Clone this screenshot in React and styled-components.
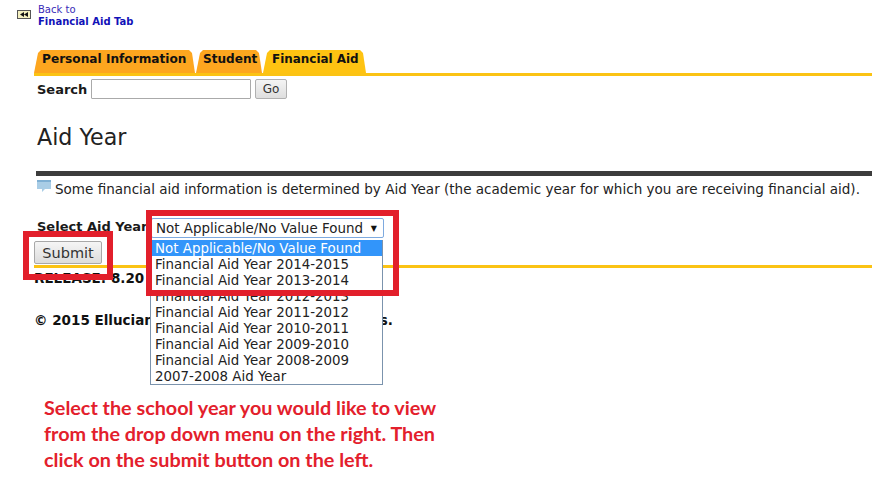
import React from "react";
import styled, { createGlobalStyle } from "styled-components";

const Global = createGlobalStyle`
  html, body { margin: 0; padding: 0; background: #fff; }
  body { font-family: "DejaVu Sans", Verdana, sans-serif; color: #1a1a1a; overflow: hidden; }
`;
const Page = styled.div`position: relative; width: 872px; height: 491px; overflow: hidden;`;
const BackRow = styled.div`display: flex; align-items: flex-start; gap: 7px; padding: 4px 0 0 17px; height: 50px; box-sizing: border-box;`;
const BackIcon = styled.div`
  width: 14px; height: 9px; margin-top: 6px; box-sizing: border-box;
  background: #f4f0c0; border: 1px solid #555; display: flex; align-items: center; justify-content: center;
`;
const BackText = styled.a`display: block; font-size: 10px; line-height: 12px; color: #3a2bb8;
  strong { display: block; color: #1212b8; font-weight: 700; }`;
const Tabs = styled.div`display: flex; padding-left: 34px; height: 23px; align-items: flex-end;`;
const Tab = styled.div`
  height: 23px; box-sizing: border-box; padding: 1px 0 0 ${p => p.$pl || 8}px; font-size: ${p => p.$fs || 12.1}px; font-weight: 700; line-height: 17px; white-space: nowrap;
  width: ${p => p.$w}px; margin-left: ${p => p.$ml || 0}px;
  background: ${p => p.$active ? "#fec312" : "#fda61f"};
  clip-path: polygon(0 100%, 4px 3px, 7px 0, calc(100% - 6px) 0, calc(100% - 3px) 3px, 100% 100%);
  color: #111;
`;
const Rule = styled.div`height: 3px; margin-left: 34px; background: #fbc314;`;
const SearchRow = styled.div`display: flex; align-items: center; padding: 3px 0 0 37px; height: 20px;`;
const SearchLabel = styled.label`font-size: 13px; font-weight: 700; width: 54px;`;
const SearchInput = styled.div`width: 160px; height: 20px; box-sizing: border-box; border: 1px solid #aaa; border-radius: 1px; background: #fff;`;
const GoButton = styled.div`
  width: 32px; height: 20px; margin-left: 4px; box-sizing: border-box; border: 1px solid #b0b0b0; border-radius: 2px;
  background: linear-gradient(#f4f4f4, #dedede); font-size: 12px; line-height: 18px; text-align: center; color: #333;
`;
const Heading = styled.h2`margin: 0; padding: 24px 0 0 37px; height: 48px; font-size: 22.2px; font-weight: 400; line-height: 28px; color: #222;`;
const DarkBar = styled.div`height: 5px; margin-left: 36px; background: #3c3c3c;`;
const Info = styled.div`display: flex; align-items: flex-start; gap: 4px; padding: 4px 0 0 37px; height: 28px; box-sizing: border-box; white-space: nowrap; font-size: 13.54px; line-height: 18px; color: #222;`;
const InfoIcon = styled.svg`width: 14px; height: 13px; flex: none;`;
const FormRow = styled.div`display: flex; align-items: center; padding: 14px 0 0 37px; height: 20px;`;
const SelectLabel = styled.label`font-size: 13px; font-weight: 700; width: 114px; height: 20px; line-height: 17px; white-space: nowrap; overflow: hidden;`;
const SelectBox = styled.div`
  width: 233px; height: 20px; box-sizing: border-box; border: 1px solid #7eaadf; border-radius: 2px; background: #fff;
  display: flex; justify-content: space-between; align-items: center; padding: 0 5px 0 4px; font-size: 13.45px; color: #222; white-space: nowrap;
`;
const Arrow = styled.span`font-size: 8px; color: #111; margin-right: 1px;`;
const SubmitRow = styled.div`padding: 3px 0 0 34px; height: 24px;`;
const SubmitButton = styled.div`
  width: 68px; height: 23px; box-sizing: border-box; border: 1px solid #a8a8a8; border-radius: 2px;
  background: linear-gradient(#f5f5f5, #dcdcdc); font-size: 14.5px; line-height: 22px; text-align: center; color: #333;
`;
const Release = styled.div`padding: 0 0 0 34px; height: 25px; font-size: 13.5px; font-weight: 700; line-height: 20px; color: #111; white-space: nowrap;`;
const Copyright = styled.div`padding: 18px 0 0 34px; font-size: 13.5px; font-weight: 700; line-height: 18px; color: #111; white-space: nowrap;`;
const Menu = styled.div`
  position: absolute; left: 150px; top: 240px; width: 233px; box-sizing: border-box; height: 145px;
  border: 1px solid #7b93ad; border-top: none; background: #fff; font-size: 13.4px; color: #222;
`;
const Option = styled.div`
  height: 16px; line-height: 17px; padding-left: 4px; white-space: nowrap;
  background: ${p => p.$active ? "#3295fa" : "transparent"};
  color: ${p => p.$active ? "#fff" : "#222"};
`;
const Highlight = styled.div`
  position: absolute; box-sizing: border-box; border: 6px solid #e21f2b;
  left: ${p => p.$x}px; top: ${p => p.$y}px; width: ${p => p.$w}px; height: ${p => p.$h}px;
`;
const Note = styled.div`
  position: absolute; left: 44px; top: 394px; font-family: Lato, "Open Sans", sans-serif; font-weight: 700;
  font-size: 19.8px; line-height: 26px; color: #e3202c; white-space: nowrap;
`;

const years = ["Financial Aid Year 2014-2015","Financial Aid Year 2013-2014","Financial Aid Year 2012-2013","Financial Aid Year 2011-2012","Financial Aid Year 2010-2011","Financial Aid Year 2009-2010","Financial Aid Year 2008-2009","2007-2008 Aid Year"];

export default function App() {
  return (
    <Page>
      <Global />
      <BackRow>
        <BackIcon>
          <svg width="8" height="5" viewBox="0 0 8 5"><path d="M4 0v5L0 2.5zM8 0v5L4 2.5z" fill="#111" /></svg>
        </BackIcon>
        <BackText>Back to<strong>Financial Aid Tab</strong></BackText>
      </BackRow>
      <Tabs>
        <Tab $w={161} $fs={12.15}>Personal Information</Tab>
        <Tab $w={66} $ml={1} $pl={7}>Student</Tab>
        <Tab $active $w={103} $ml={1} $pl={9} $fs={11.95}>Financial Aid</Tab>
      </Tabs>
      <Rule />
      <SearchRow>
        <SearchLabel>Search</SearchLabel>
        <SearchInput />
        <GoButton>Go</GoButton>
      </SearchRow>
      <Heading>Aid Year</Heading>
      <DarkBar />
      <Info>
        <InfoIcon viewBox="0 0 14 13">
          <path d="M0 0h14v9H8l-3 3V9H0z" fill="#a9cde6" />
          <path d="M0 0h14v2H0z" fill="#7fb0d4" />
        </InfoIcon>
        <span>Some financial aid information is determined by Aid Year (the academic year for which you are receiving financial aid).</span>
      </Info>
      <FormRow>
        <SelectLabel>Select Aid Year</SelectLabel>
        <SelectBox>Not Applicable/No Value Found<Arrow>▼</Arrow></SelectBox>
      </FormRow>
      <SubmitRow><SubmitButton>Submit</SubmitButton></SubmitRow>
      <Rule />
      <Release>RELEASE: 8.20</Release>
      <Copyright>© 2015 Ellucian Company L.P. and its affiliates.</Copyright>
      <Menu>
        <Option $active>Not Applicable/No Value Found</Option>
        {years.map(y => <Option key={y}>{y}</Option>)}
      </Menu>
      <Highlight $x={146} $y={210} $w={253} $h={86} />
      <Highlight $x={23} $y={231} $w={90} $h={49} />
      <Note>Select the school year you would like to view<br />from the drop down menu on the right. Then<br />click on the submit button on the left.</Note>
    </Page>
  );
}
